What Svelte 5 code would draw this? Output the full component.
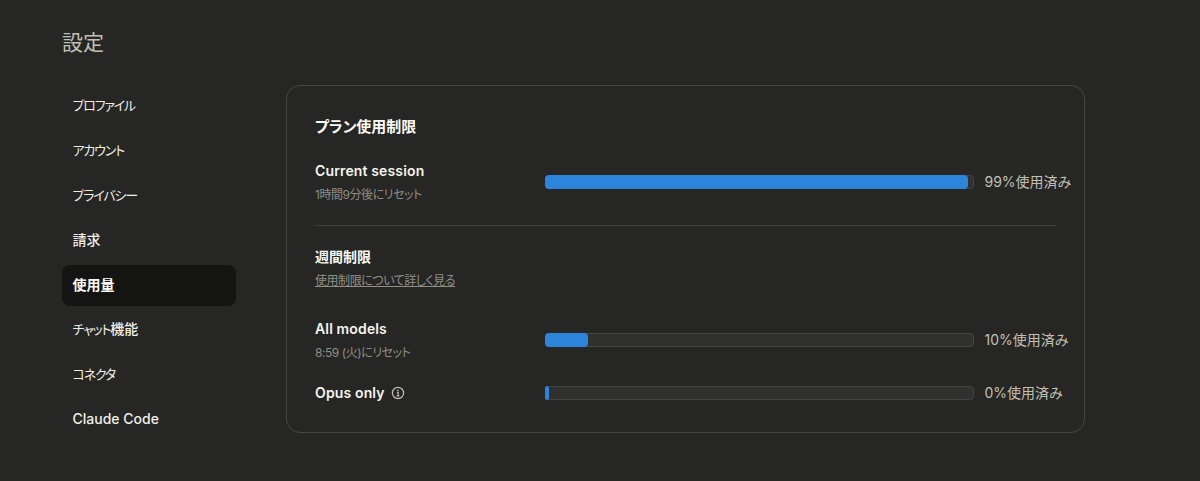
<script>
	const navItems = ['プロファイル', 'アカウント', 'プライバシー', '請求', '使用量', 'チャット機能', 'コネクタ', 'Claude Code'];
	const activeItem = '使用量';

	const session = { name: 'Current session', reset: '1時間9分後にリセット', percent: 99 };
	const weekly = [
		{ name: 'All models', reset: '8:59 (火)にリセット', percent: 10 },
		{ name: 'Opus only', info: true, percent: 0 }
	];

	// katakana runs are set tighter than the kanji next to them
	const kanaRuns = (text) => text.split(/([ァ-ヶー]+)/).filter(Boolean);
	const isKana = (run) => /^[ァ-ヶー]/.test(run);
</script>

{#snippet usageRow(row)}
	<div class="usage-row" class:single={!row.reset}>
		<div class="usage-label">
			<div class="usage-name">
				{row.name}
				{#if row.info}
					<svg class="info" viewBox="0 0 14 14" width="14" height="14" fill="none" stroke="currentColor">
						<circle cx="7" cy="7" r="5.6" stroke-width="1.2" />
						<path d="M5.9 6.4H7.1V9.9M5.7 9.9H8.4" stroke-width="1.2" />
						<circle cx="6.9" cy="4.4" r="0.8" fill="currentColor" stroke="none" />
					</svg>
				{/if}
			</div>
			{#if row.reset}
				<div class="usage-reset">{row.reset}</div>
			{/if}
		</div>
		<div class="bar">
			<div class="bar-fill" style="width: {Math.max(row.percent, 1)}%"></div>
		</div>
		<div class="usage-value">{row.percent}%使用済み</div>
	</div>
{/snippet}

<div class="page">
	<h1>設定</h1>
	<div class="layout">
		<nav>
			{#each navItems as item}
				<div class="nav-item" class:active={item === activeItem}>
					{#each kanaRuns(item) as run}
						<span class:kana={isKana(run)}>{run}</span>
					{/each}
				</div>
			{/each}
		</nav>
		<main class="card">
			<h2>プラン使用制限</h2>
			{@render usageRow(session)}
			<hr />
			<h3>週間制限</h3>
			<span class="link">使用制限について詳しく見る</span>
			<div class="weekly">
				{#each weekly as row}
					{@render usageRow(row)}
				{/each}
			</div>
		</main>
	</div>
</div>

<style>
	:global(body) {
		background-color: #262624;
	}

	.page {
		height: 481px;
		box-sizing: border-box;
		padding: 29px 0 0 62px;
		overflow: hidden;
		font-family: Inter, 'Noto Sans CJK JP', sans-serif;
		font-feature-settings: 'palt';
		color: #f5f4ef;
	}

	h1 {
		margin: 0;
		font-size: 21px;
		line-height: 28px;
		font-weight: 400;
		color: #c2c0b6;
	}

	.layout {
		display: flex;
		align-items: flex-start;
		gap: 50px;
		margin-top: 28px;
	}

	nav {
		width: 174px;
		display: flex;
		flex-direction: column;
		gap: 3.9px;
	}

	.nav-item {
		height: 41px;
		line-height: 40px;
		padding-left: 10.5px;
		border-radius: 8px;
		font-size: 14px;
		font-weight: 500;
		color: #f0eee8;
	}

	.nav-item.active {
		background-color: #141413;
		color: #faf9f5;
		font-weight: 600;
	}

	.kana {
		font-size: 13px;
		font-weight: 400;
		letter-spacing: -1.2px;
	}

	.card {
		width: 799px;
		height: 348px;
		box-sizing: border-box;
		padding: 28px 28px 0;
		border: 1px solid #454542;
		border-radius: 14px;
	}

	h2 {
		margin: 0;
		font-size: 15px;
		line-height: 26px;
		font-weight: 600;
		color: #faf9f5;
	}

	.usage-row {
		display: flex;
		align-items: center;
		height: 46px;
		margin-top: 20px;
	}

	.usage-row.single {
		height: 24px;
		margin-top: 17px;
	}

	.usage-label {
		width: 230px;
		flex-shrink: 0;
		align-self: flex-start;
	}

	.single .usage-label {
		align-self: center;
	}

	.usage-name {
		display: flex;
		align-items: center;
		gap: 6px;
		font-size: 14px;
		line-height: 22px;
		font-weight: 600;
		letter-spacing: 0.01em;
		color: #f5f4ef;
	}

	.usage-reset {
		margin-top: 1px;
		font-size: 12px;
		line-height: 24px;
		letter-spacing: -0.45px;
		color: #8f8e87;
	}

	.info {
		color: #c2c0b6;
	}

	.bar {
		width: 429px;
		height: 14px;
		margin-bottom: 2px;
		flex-shrink: 0;
		box-sizing: border-box;
		background-color: #30302e;
		border: 1px solid #454542;
		border-radius: 4px;
	}

	.single .bar {
		margin-bottom: 0;
	}

	.bar-fill {
		height: 100%;
		margin: -1px 0 0 -1px;
		padding-bottom: 2px;
		box-sizing: content-box;
		background-color: #2c84db;
		border-radius: 4px;
	}

	.usage-value {
		margin: 0 0 4px 10.5px;
		white-space: nowrap;
		font-size: 14px;
		color: #c2c0b6;
	}

	.single .usage-value {
		margin-bottom: 2px;
	}

	hr {
		margin: 19px 0 0;
		border: none;
		border-top: 1px solid #3e3e3b;
	}

	h3 {
		margin: 19px 0 0;
		font-size: 14px;
		line-height: 24px;
		font-weight: 600;
		color: #faf9f5;
	}

	.link {
		display: block;
		margin-top: 2px;
		font-size: 12px;
		line-height: 20px;
		letter-spacing: -0.45px;
		color: #8f8e87;
		text-decoration: underline;
	}

	.weekly {
		margin-top: 27px;
	}
</style>
